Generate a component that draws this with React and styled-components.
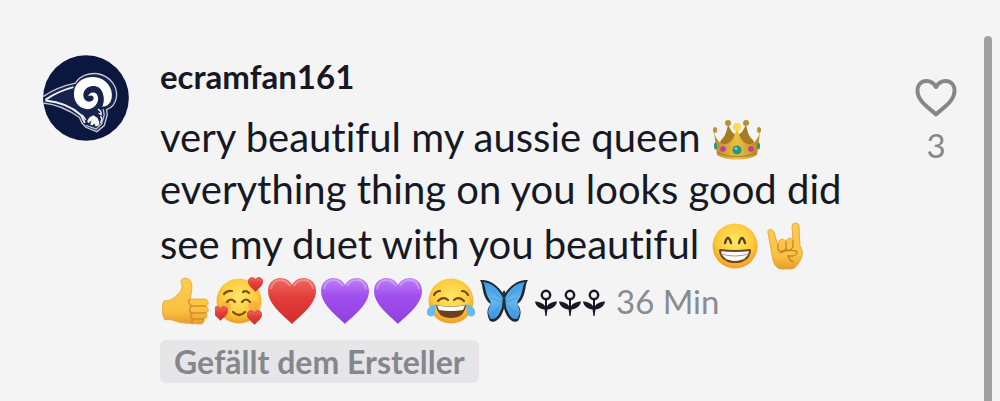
import React, { useState } from "react";
import styled, { createGlobalStyle } from "styled-components";

const GlobalStyle = createGlobalStyle`
  body {
    margin: 0;
    background-color: #f4f4f5;
    font-family: Lato, "Liberation Sans", sans-serif;
    font-variant-ligatures: none;
    color: #161823;
  }
`;

const Page = styled.main`
  display: flex;
  min-height: 100vh;
`;

const Comment = styled.article`
  display: flex;
  flex: 1;
  align-items: flex-start;
  padding: 55px 20px 16px 43px;
`;

const Avatar = styled.svg`
  flex: none;
  width: 86px;
  height: 86px;
  margin-right: 31px;
`;

const Content = styled.div`
  flex: 1;
  min-width: 0;
`;

const UserName = styled.a`
  display: block;
  font-size: 33px;
  line-height: 42px;
  font-weight: 700;
  color: inherit;
  text-decoration: none;
`;

const Message = styled.p`
  margin: 11px 0 0;
  font-size: 40px;
  line-height: 52px;
`;

const Emoji = styled.svg`
  width: 48px;
  height: 48px;
  margin: 7px 3px 0 2px;
  vertical-align: -11px;
`;

const Flowers = styled.span`
  margin: 0 10px 0 3px;
`;

const Flower = styled.svg`
  width: 24px;
  height: 28px;
  vertical-align: -3px;
`;

const Time = styled.time`
  font-size: 33px;
  color: #8a8b91;
`;

const Tag = styled.span`
  display: inline-block;
  margin-top: 13px;
  padding: 0 14px;
  border-radius: 6px;
  background-color: #e6e6e8;
  font-size: 32px;
  line-height: 43px;
  font-weight: 700;
  color: #86878d;
`;

const LikeButton = styled.button`
  display: flex;
  flex-direction: column;
  align-items: center;
  flex: none;
  width: 56px;
  margin-top: 22px;
  padding: 0;
  border: 0;
  background: none;
  font-family: inherit;
  font-size: 33px;
  line-height: 44px;
  color: #86878b;
  cursor: pointer;
`;

const LikeIcon = styled.svg`
  width: 44px;
  height: 42px;
  margin-bottom: 4px;
`;

const ScrollBar = styled.div`
  flex: none;
  width: 8px;
  margin: 36px 8px 0 0;
  border-radius: 4px 4px 0 0;
  background-color: #a0a0a1;
`;

const HEART = "M24 47 C20 42 0 29 0 14 C0 6 6 1 12 1 C18 1 22 4 24 8 C26 4 30 1 36 1 C42 1 48 6 48 14 C48 29 28 42 24 47Z";

// shared gradients for all emoji
const Gradients = () => (
  <svg width="0" height="0" style={{ position: "absolute" }} aria-hidden="true">
    <defs>
      <radialGradient id="face" cx="50%" cy="40%" r="60%">
        <stop offset="0" stopColor="#ffe766" />
        <stop offset="0.65" stopColor="#fdcb3e" />
        <stop offset="1" stopColor="#ee9c25" />
      </radialGradient>
      <linearGradient id="skin" x1="0" y1="0" x2="0" y2="1">
        <stop offset="0" stopColor="#fdcc4f" />
        <stop offset="0.7" stopColor="#f9c243" />
        <stop offset="1" stopColor="#e79d2b" />
      </linearGradient>
      <linearGradient id="gold" x1="0" y1="0" x2="1" y2="0">
        <stop offset="0" stopColor="#bd8a24" />
        <stop offset="0.5" stopColor="#edc044" />
        <stop offset="1" stopColor="#b98421" />
      </linearGradient>
      <linearGradient id="red" x1="0" y1="0" x2="0" y2="1">
        <stop offset="0" stopColor="#f06a62" />
        <stop offset="0.4" stopColor="#e2403b" />
        <stop offset="1" stopColor="#d02c2c" />
      </linearGradient>
      <linearGradient id="purple" x1="0" y1="0" x2="0" y2="1">
        <stop offset="0" stopColor="#bd80f5" />
        <stop offset="0.4" stopColor="#a04eee" />
        <stop offset="1" stopColor="#9140dc" />
      </linearGradient>
      <linearGradient id="wing" x1="0" y1="0" x2="0" y2="1">
        <stop offset="0" stopColor="#3f97e0" />
        <stop offset="0.5" stopColor="#62b9f3" />
        <stop offset="1" stopColor="#3d92dc" />
      </linearGradient>
    </defs>
  </svg>
);

const Crown = () => (
  <Emoji viewBox="0 -3 48 48" role="img" aria-label="crown">
    <path d="M5 30 L8 22 C12 19 14 13 15 6 C17 12 20 16 24 17 C28 16 31 12 33 6 C34 13 36 19 40 22 L43 30Z" fill="#a97a25" />
    <path d="M1 14 C3 22 8 27 13 26 C19 25 22 18 24 9 C26 18 29 25 35 26 C40 27 45 22 47 14 L44 37 C34 43 14 43 4 37Z" fill="url(#gold)" />
    <path d="M4 34 C14 40 34 40 44 34" fill="none" stroke="#b17b20" strokeWidth="1" />
    <circle cx="15" cy="5" r="3" fill="#bd8e31" />
    <circle cx="33" cy="5" r="3" fill="#bd8e31" />
    <circle cx="24" cy="9" r="4" fill="#ffda4d" />
    <ellipse cx="2" cy="12" rx="2" ry="3" fill="#c48d2c" />
    <ellipse cx="46" cy="12" rx="2" ry="3" fill="#c48d2c" />
    <circle cx="24" cy="32" r="4.500" fill="#219b7e" />
    <circle cx="23" cy="30.500" r="1.500" fill="#7bd7bd" />
    <circle cx="10" cy="31" r="2.800" fill="#bf3ba7" />
    <circle cx="38" cy="31" r="2.800" fill="#bf3ba7" />
    <ellipse cx="2.500" cy="28" rx="1.500" ry="3.500" fill="#219b7e" />
    <ellipse cx="45.500" cy="28" rx="1.500" ry="3.500" fill="#219b7e" />
  </Emoji>
);

const Grin = () => (
  <Emoji viewBox="0 0 48 48" role="img" aria-label="beaming face">
    <circle cx="24" cy="24" r="22.500" fill="url(#face)" />
    <path d="M14 21 Q17 11 20 21 M28 21 Q31 11 34 21" fill="none" stroke="#5f3b12" strokeWidth="2.400" strokeLinecap="round" />
    <path d="M9 28 Q24 30 39 28 C39 35 33 40 24 40 C15 40 9 35 9 28Z" fill="#fff" stroke="#6a451d" strokeWidth="2" strokeLinejoin="round" />
    <path d="M10 32 Q24 36 38 32" fill="none" stroke="#a59b93" strokeWidth="1.200" />
    <path d="M15 30 V38 M24 31 V39 M33 30 V38" fill="none" stroke="#ddd8d3" strokeWidth="0.600" />
  </Emoji>
);

const Horns = () => (
  <Emoji viewBox="0 0 48 48" role="img" aria-label="sign of the horns">
    <path d="M4 11 C3 7 8 6 10 10 L14 24 C13 17 20 15 22 20 C23 15 28 15 29 19 L28 4 C28 0 35 0 35 4 L36 24 C40 30 38 35 36 39 C33 43 32 47 26 47 L16 47 C10 45 9 39 8 33 Z" fill="url(#skin)" stroke="#dda032" strokeWidth="0.800" />
    <path d="M14 23 L14 28 M22 20 L22 27 M14 28 Q18 31 22 27 Q26 30 29 25 L29 19 M16 31 Q23 27 32 29 Q35 32 29 34 L24 34 Q25 38 29 40" fill="none" stroke="#c98325" strokeWidth="1.300" strokeLinecap="round" />
  </Emoji>
);

const ThumbsUp = () => (
  <Emoji viewBox="0 0 48 48" role="img" aria-label="thumbs up">
    <path d="M2 24 C8 24 13 21 16 17 C20 13 21 10 19 5 C19 0 27 0 29 5 C31 10 29 17 28 22 L43 22 C47 23 47 28 44 29 C47 31 47 35 44 36 C46 38 45 42 42 42 C43 45 41 47 38 47 L22 46 C15 46 9 41 3 43 C0 39 -1 29 2 24Z" fill="url(#skin)" stroke="#dfa235" strokeWidth="0.800" />
    <path d="M28 22 C25 25 28 29 31 29 L44 29 M31 29 C26 30 27 36 31 36 L44 36 M31 36 C27 37 28 42 32 42 L42 42 M32 42 Q28 44 31 47" fill="none" stroke="#d28e2a" strokeWidth="1.300" />
  </Emoji>
);

const SmallHeart = ({ x, y }) => (
  <svg x={x} y={y} width="15" height="15" viewBox="-1 -1 50 50">
    <path d={HEART} fill="url(#red)" stroke="#c82b2b" strokeWidth="2" />
  </svg>
);

const LoveFace = () => (
  <Emoji viewBox="0 0 48 48" role="img" aria-label="smiling face with hearts">
    <circle cx="24" cy="24" r="22.500" fill="url(#face)" />
    <circle cx="11" cy="29" r="5" fill="#f58a43" opacity="0.400" />
    <circle cx="38" cy="29" r="5" fill="#f58a43" opacity="0.400" />
    <path d="M12 25 Q16 20 20 25 M27 25 Q31 20 35 25 M18 35 Q24 41 30 35 M9 17 Q12 13 17 14 M28 15 Q31 13 34 16" fill="none" stroke="#7a4c18" strokeWidth="2.200" strokeLinecap="round" />
    <SmallHeart x="33" y="0" />
    <SmallHeart x="-2" y="29" />
    <SmallHeart x="32" y="33" />
  </Emoji>
);

const Heart = ({ color, label }) => (
  <Emoji viewBox="0 0 48 48" role="img" aria-label={label}>
    <path d={HEART} fill={`url(#${color})`} />
    <path d="M3 12 C4 6 8 3 12 3 C17 3 20 6 22 9 M26 9 C28 5 32 3 36 3 C41 3 44 7 45 12" fill="none" stroke="#fff" strokeWidth="2" opacity="0.300" />
  </Emoji>
);

const Joy = () => (
  <Emoji viewBox="0 0 48 48" role="img" aria-label="tears of joy">
    <circle cx="24" cy="24" r="22.500" fill="url(#face)" />
    <path d="M11 24 Q16 19 21 23 M27 23 Q32 19 37 24 M7 18 Q9 14 13 14 M35 14 Q39 14 41 18" fill="none" stroke="#70431a" strokeWidth="2.200" strokeLinecap="round" />
    <path d="M9 28 Q24 31 39 28 C38 37 33 41 24 41 C15 41 10 37 9 28Z" fill="#70401c" />
    <path d="M10 28.500 Q24 31 38 28.500 L36 33 Q24 35 12 33Z" fill="#fff" />
    <path d="M9 27 C3 28 -1 32 0 37 C2 41 8 40 8 35 Z" fill="#63bdf4" />
    <path d="M39 27 C45 28 49 32 48 37 C46 41 40 40 40 35 Z" fill="#63bdf4" />
  </Emoji>
);

const Butterfly = () => (
  <Emoji viewBox="0 0 48 48" role="img" aria-label="butterfly">
    <path d="M24 18 C18 8 9 2 0 3 C3 7 2 15 6 22 C8 25 9 26 11 27 C7 31 6 37 10 44 C16 47 22 40 24 31 C26 40 32 47 38 44 C42 37 41 31 37 27 C39 26 40 25 42 22 C46 15 45 7 48 3 C39 2 30 8 24 18Z" fill="#1d2731" />
    <path d="M23 21 C18 11 12 6 3 5 C6 10 5 16 9 22 C12 26 10 28 9 31 C7 36 9 39 11 42 C17 43 20 36 22 30Z M25 21 C30 11 36 6 45 5 C42 10 43 16 39 22 C36 26 38 28 39 31 C41 36 39 39 37 42 C31 43 28 36 26 30Z" fill="url(#wing)" />
    <path d="M23 24 L13 13 M22 25 L11 21 M21 28 L13 36 M25 24 L35 13 M26 25 L37 21 M27 28 L35 36" fill="none" stroke="#327fbb" strokeWidth="0.600" />
    <path d="M24 15 V31" stroke="#263039" strokeWidth="2.500" strokeLinecap="round" />
  </Emoji>
);

const FlowerMark = () => (
  <Flower viewBox="0 0 24 28" role="img" aria-label="flower">
    <circle cx="12" cy="6" r="4.200" fill="none" stroke="#161823" strokeWidth="2.400" />
    <path d="M11 10 H13 V17 C15 14 19 12.500 23 12.500 C22.500 17 18 20 13.400 20.500 L12.600 27 H11.400 L10.600 20.500 C6 20 1.500 17 1 12.500 C5 12.500 9 14 11 17Z" fill="#161823" />
  </Flower>
);

const RamAvatar = () => (
  <Avatar viewBox="39 28 257 257" role="img" aria-label="ecramfan161">
    <defs>
      <clipPath id="round">
        <circle cx="167.500" cy="156.500" r="128" />
      </clipPath>
    </defs>
    <g clipPath="url(#round)">
      <rect x="39" y="28" width="257" height="257" fill="#0c1740" />
      <path d="M34 156 C65 133 102 119 136 112 C148 91 174 80 203 84 C240 91 264 124 258 157 C254 177 242 187 229 191 L231 207 L222 239 L200 257 L167 244 L156 232 L148 215 C114 190 74 174 34 171Z" fill="#17234c" stroke="#c5cad6" strokeWidth="4" />
      <path d="M46 162 C72 144 102 131 130 124 M46 164 C88 168 126 183 153 208 L164 231" fill="none" stroke="#edf0f5" strokeWidth="6" />
      <path d="M166 238 L198 249 L214 234 L222 207 L219 190" fill="none" stroke="#b9c0cf" strokeWidth="4" />
      <path d="M172 190 C142 187 126 160 133 130 C142 100 175 88 205 96 C237 106 252 138 242 165 C237 177 228 182 216 183 C225 165 221 138 207 126 C190 115 166 122 160 142 C157 158 168 170 181 167 C190 165 192 158 189 153 C185 148 180 148 174 151 C177 139 192 136 200 145 C211 161 198 188 172 190Z" fill="#fff" />
      <path d="M178 214 L190 208 L202 216 L207 228 L207 238 L196 242 L192 232 L187 239 L180 236 L184 224 L174 232 L171 225Z" fill="#f6f7fa" />
      <path d="M203 190 Q214 196 213 206 L205 202 M211 210 L215 219 L211 232 M156 207 L167 222" fill="none" stroke="#f6f7fa" strokeWidth="4" />
    </g>
  </Avatar>
);

const App = () => {
  const [liked, setLiked] = useState(false);

  return (
    <>
      <GlobalStyle />
      <Gradients />
      <Page>
        <Comment>
          <RamAvatar />
          <Content>
            <UserName href="#ecramfan161">ecramfan161</UserName>
            <Message>
              very beautiful my aussie queen <Crown />
              <br />
              everything thing on you looks good did
              <br />
              see my duet with you beautiful <Grin />
              <Horns />
              <br />
              <ThumbsUp />
              <LoveFace />
              <Heart color="red" label="red heart" />
              <Heart color="purple" label="purple heart" />
              <Heart color="purple" label="purple heart" />
              <Joy />
              <Butterfly />
              <Flowers>
                <FlowerMark />
                <FlowerMark />
                <FlowerMark />
              </Flowers>
              <Time>36 Min</Time>
            </Message>
            <Tag>Gefällt dem Ersteller</Tag>
          </Content>
          <LikeButton
            type="button"
            aria-label="Like, 3"
            aria-pressed={liked}
            onClick={() => setLiked(!liked)}
          >
            <LikeIcon viewBox="0 0 44 42">
              <path
                d="M22 37.500 C18 33 3.500 25 3.500 14 C3.500 7.500 7.500 4 12.500 4 C17 4 20 6.500 22 10 C24 6.500 27 4 31.500 4 C36.500 4 40.500 7.500 40.500 14 C40.500 25 26 33 22 37.500Z"
                fill={liked ? "#fe2c55" : "none"}
                stroke={liked ? "#fe2c55" : "#86878b"}
                strokeWidth="4"
                strokeLinejoin="round"
              />
            </LikeIcon>
            3
          </LikeButton>
        </Comment>
        <ScrollBar />
      </Page>
    </>
  );
};

export default App;
